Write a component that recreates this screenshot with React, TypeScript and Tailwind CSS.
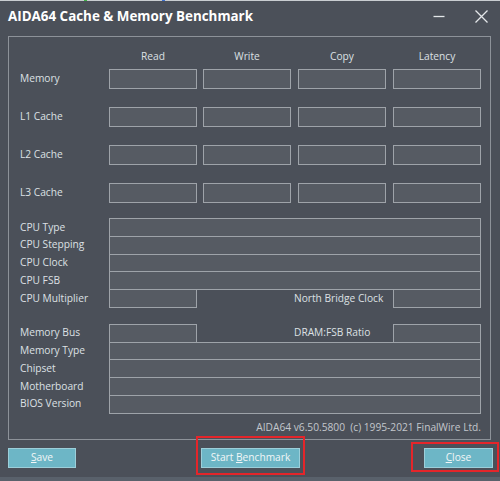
import React from 'react';

const font = { fontFamily: '"Open Sans", "Noto Sans", "Liberation Sans", sans-serif' };

function Box({ className = '' }: { className?: string }) {
    return <div className={`h-[20px] w-[88px] border border-[#9ea3a9] bg-[#565b63] ${className}`} />;
}

function Row({ label, last = false }: { label: string; last?: boolean }) {
    return (
        <div className={`flex items-center ${last ? '' : 'mb-[18px]'}`}>
            <div className="w-[89px] text-[10.2px] text-[#dde0e4]">{label}</div>
            <Box />
            <Box className="ml-[6px]" />
            <Box className="ml-[7px]" />
            <Box className="ml-[7px]" />
        </div>
    );
}

function WideRow({ label, first = false }: { label: string; first?: boolean }) {
    return (
        <div className={`flex items-center ${first ? '' : '-mt-px'}`}>
            <div className="w-[89px] text-[10.2px] text-[#dde0e4]">{label}</div>
            <div className="h-[18.75px] w-[372px] border border-[#9ea3a9] bg-[#565b63]" />
        </div>
    );
}

function SplitRow({ label, right, first = false }: { label: string; right: string; first?: boolean }) {
    return (
        <div className={`flex items-center ${first ? '' : '-mt-px'}`}>
            <div className="w-[89px] text-[10.2px] text-[#dde0e4]">{label}</div>
            <div className="h-[18.75px] w-[88px] border border-[#9ea3a9] bg-[#565b63]" />
            <div className="w-[196px] pl-[97px] text-[10.2px] text-[#dde0e4]">{right}</div>
            <div className="h-[18.75px] w-[88px] border border-[#9ea3a9] bg-[#565b63]" />
        </div>
    );
}

function Btn({ first, rest, className = '' }: { first: React.ReactNode; rest: string; className?: string }) {
    return (
        <div className={`flex h-[20px] items-center justify-center border border-[#9ccfda] bg-[#6db6c6] text-[10.2px] text-[#f2f6f7] ${className}`}>
            {first}{rest}
        </div>
    );
}

export default function App() {
    return (
        <div className="relative flex h-[481px] w-[500px] flex-col overflow-hidden bg-[#4b5059]" style={font}>
            {/* strip from the window behind */}
            <div className="relative h-px bg-[#c9cdd1]">
                <span className="absolute left-[84px] top-0 h-px w-[3px] bg-[#3cb043]" />
                <span className="absolute left-[162px] top-0 h-px w-[3px] bg-[#3b6fd1]" />
            </div>

            {/* title bar */}
            <div className="flex h-[35px] items-center pb-[5px] pl-[8px] pr-[12px]">
                <div className="text-[13.4px] font-bold text-white">AIDA64 Cache &amp; Memory Benchmark</div>
                <div className="ml-auto flex items-center gap-[30px]">
                    <svg width="12" height="12" viewBox="0 0 12 12">
                        <path d="M0.5 6.5H11.5" stroke="#e4e7ea" strokeWidth="1.3" />
                    </svg>
                    <svg width="13" height="13" viewBox="0 0 13 13">
                        <path d="M0.5 0.5L12.5 12.5M12.5 0.5L0.5 12.5" stroke="#e4e7ea" strokeWidth="1.3" />
                    </svg>
                </div>
            </div>

            {/* group box */}
            <div className="ml-[8px] flex h-[404px] w-[483px] flex-col border border-[#8d9299] pl-[11px]">
                <div className="mt-[12px] flex h-[16px] items-center text-[10.2px] text-[#dde0e4]">
                    <div className="w-[89px]" />
                    <div className="w-[88px] text-center">Read</div>
                    <div className="ml-[6px] w-[88px] text-center">Write</div>
                    <div className="ml-[7px] w-[88px] text-center">Copy</div>
                    <div className="ml-[7px] w-[88px] text-center">Latency</div>
                </div>

                <div className="mt-[4px]">
                    <Row label="Memory" />
                    <Row label="L1 Cache" />
                    <Row label="L2 Cache" />
                    <Row label="L3 Cache" last />
                </div>

                <div className="mt-[15px]">
                    <WideRow label="CPU Type" first />
                    <WideRow label="CPU Stepping" />
                    <WideRow label="CPU Clock" />
                    <WideRow label="CPU FSB" />
                    <SplitRow label="CPU Multiplier" right="North Bridge Clock" />
                </div>

                <div className="mt-[16px]">
                    <SplitRow label="Memory Bus" right="DRAM:FSB Ratio" first />
                    <WideRow label="Memory Type" />
                    <WideRow label="Chipset" />
                    <WideRow label="Motherboard" />
                    <WideRow label="BIOS Version" />
                </div>

                <div className="mt-[6px] w-[461px] whitespace-pre text-right text-[10.2px] text-[#c3c7cc]">
                    AIDA64 v6.50.5800  (c) 1995-2021 FinalWire Ltd.
                </div>
            </div>

            {/* buttons */}
            <div className="mt-[8px] flex items-center pl-[8px]">
                <Btn className="w-[68px]" first={<span className="underline">S</span>} rest="ave" />
                <Btn className="ml-[125px] w-[99px]" first={<span>Start <span className="underline">B</span></span>} rest="enchmark" />
                <Btn className="ml-[124px] w-[69px]" first={<span className="underline">C</span>} rest="lose" />
            </div>

            <div className="mt-auto h-[4px] bg-[#59616b]" />

            {/* annotation boxes */}
            <div className="pointer-events-none absolute left-[196px] top-[436px] h-[39px] w-[109px] border-2 border-[#e5252a]" />
            <div className="pointer-events-none absolute left-[411px] top-[442px] h-[30px] w-[88px] border-2 border-[#e5252a]" />
        </div>
    );
}
